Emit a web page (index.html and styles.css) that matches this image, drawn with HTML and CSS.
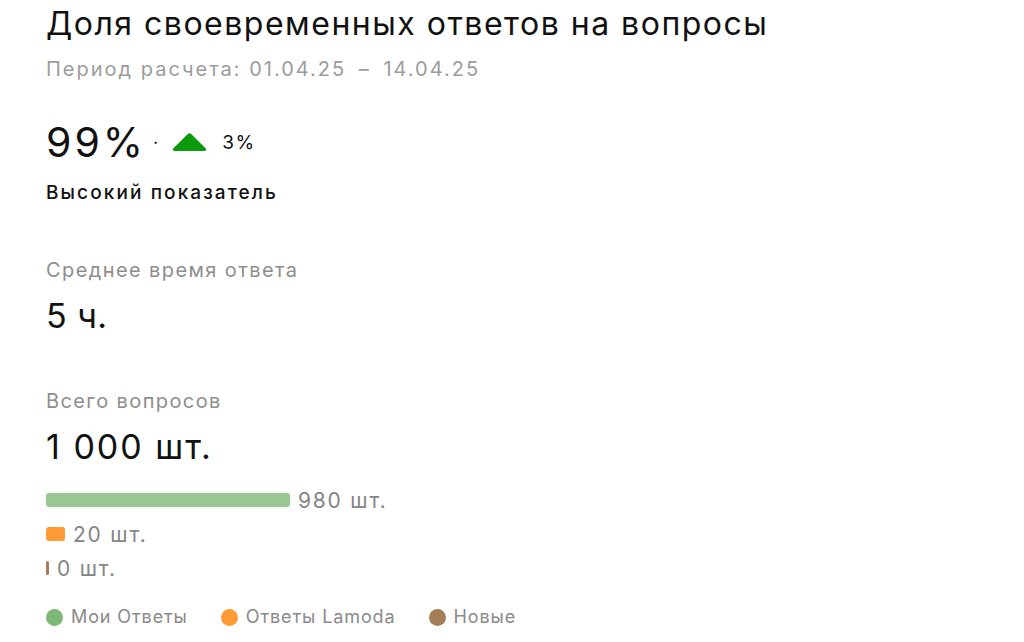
FILE: index.html
```html
<!DOCTYPE html>
<html lang="ru">

<head>
    <meta charset="UTF-8">
    <meta name="viewport" content="width=device-width, initial-scale=1.0">
    <title>Доля своевременных ответов</title>
    <link rel="stylesheet" href="styles.css">
</head>

<body>
    <div class="widget">
        <h1 class="title">Доля своевременных ответов на вопросы</h1>
        <div class="period">Период расчета: 01.04.25 <span class="period-dash">–</span> 14.04.25</div>

        <div class="rate">
            <span class="rate-value">99%</span>
            <span class="rate-dot">·</span>
            <svg class="trend" width="35" height="18" viewBox="0 0 35 18">
                <path d="M15.6 1.2 Q17.5 -0.6 19.4 1.2 L33.6 15.2 Q35 17.5 32.5 18 L2.5 18 Q0 17.5 1.4 15.2 Z" fill="#0b9a0b" />
            </svg>
            <span class="rate-delta">3%</span>
        </div>
        <div class="rate-note">Высокий показатель</div>

        <div class="label">Среднее время ответа</div>
        <div class="value value-short">5 ч.</div>

        <div class="label">Всего вопросов</div>
        <div class="value">1 000 шт.</div>

        <div class="bars">
            <div class="bar-row">
                <div class="bar mine" style="width: 244px;"></div>
                <span class="bar-count">980 шт.</span>
            </div>
            <div class="bar-row">
                <div class="bar lamoda" style="width: 19px;"></div>
                <span class="bar-count">20 шт.</span>
            </div>
            <div class="bar-row">
                <div class="bar new" style="width: 3px;"></div>
                <span class="bar-count">0 шт.</span>
            </div>
        </div>

        <div class="legend">
            <div class="legend-item"><span class="legend-dot mine"></span>Мои Ответы</div>
            <div class="legend-item"><span class="legend-dot lamoda"></span>Ответы Lamoda</div>
            <div class="legend-item"><span class="legend-dot new"></span>Новые</div>
        </div>
    </div>
</body>

</html>
```

FILE: styles.css
```css
body {
    margin: 0;
    font-family: Inter, "Noto Sans", sans-serif;
    background-color: #fff;
    color: #111;
}

.widget {
    padding: 4px 46px 0;
}

.title {
    margin: 0;
    font-size: 32px;
    line-height: 40px;
    font-weight: 400;
    letter-spacing: 1.5px;
    color: #111;
}

.period {
    margin-top: 13px;
    font-size: 20px;
    line-height: 24px;
    letter-spacing: 2px;
    color: #9c9c9c;
}

.period-dash {
    margin: 0 5px;
}

.rate {
    display: flex;
    align-items: center;
    margin-top: 37px;
    height: 48px;
}

.rate-value {
    font-size: 41px;
    line-height: 48px;
    letter-spacing: 3px;
}

.rate-dot {
    margin: 0 14px 0 7px;
    font-size: 18px;
}

.trend {
    display: block;
}

.rate-delta {
    margin-left: 15px;
    font-size: 19px;
    letter-spacing: 1.5px;
}

.rate-note {
    margin-top: 15px;
    font-size: 19px;
    line-height: 24px;
    font-weight: 500;
    letter-spacing: 2.1px;
}

.label {
    margin-top: 53px;
    font-size: 20px;
    line-height: 24px;
    letter-spacing: 1.4px;
    color: #8e8e8e;
}

.value {
    margin-top: 14px;
    font-size: 34px;
    line-height: 40px;
    letter-spacing: 2px;
}

.value-short {
    letter-spacing: 0.5px;
}

.bars {
    display: flex;
    flex-direction: column;
    gap: 10px;
    margin-top: 21px;
}

.bar-row {
    display: flex;
    align-items: center;
    gap: 8px;
    height: 24px;
}

.bar {
    height: 14px;
    border-radius: 3px;
}

.bar-count {
    font-size: 21px;
    letter-spacing: 1.8px;
    color: #858585;
}

.mine {
    background-color: #9ac893;
}

.lamoda {
    background-color: #ff9a35;
}

.new {
    background-color: #a57e59;
}

.legend {
    display: flex;
    gap: 33px;
    margin-top: 25px;
}

.legend-item {
    display: flex;
    align-items: center;
    gap: 8px;
    font-size: 18px;
    line-height: 24px;
    letter-spacing: 0.9px;
    color: #8a8a8a;
}

.legend-dot {
    width: 17px;
    height: 17px;
    border-radius: 50%;
}

.legend-dot.mine {
    background-color: #7db876;
}
```
